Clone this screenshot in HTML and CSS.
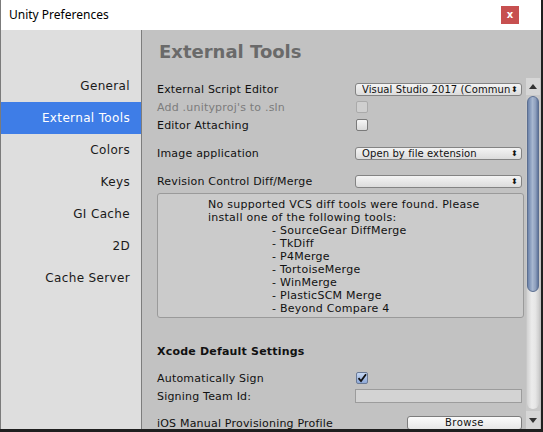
FILE: index.html
```html
<!DOCTYPE html>
<html>
<head>
<meta charset="utf-8">
<link rel="stylesheet" href="styles.css">
</head>
<body>
<div class="window">
  <div class="titlebar">
    <span class="title">Unity Preferences</span>
    <span class="close">x</span>
  </div>
  <div class="content">
    <nav class="sidebar">
      <div class="item">General</div>
      <div class="item selected">External Tools</div>
      <div class="item">Colors</div>
      <div class="item">Keys</div>
      <div class="item">GI Cache</div>
      <div class="item">2D</div>
      <div class="item">Cache Server</div>
    </nav>
    <main class="main">
      <h1 class="heading">External Tools</h1>
      <div class="scroller">
        <div class="pane">
          <div class="row"><span class="label">External Script Editor</span><span class="popup"><span class="ptext">Visual Studio 2017 (Commun</span><span class="arrows">⬍</span></span></div>
          <div class="row"><span class="label disabled">Add .unityproj's to .sln</span><span class="check disabled"></span></div>
          <div class="row"><span class="label">Editor Attaching</span><span class="check"></span></div>
          <div class="row gap"><span class="label">Image application</span><span class="popup"><span class="ptext">Open by file extension</span><span class="arrows">⬍</span></span></div>
          <div class="row gap"><span class="label">Revision Control Diff/Merge</span><span class="popup"><span class="ptext"></span><span class="arrows">⬍</span></span></div>
          <div class="helpbox">
            <div class="hline">No supported VCS diff tools were found. Please</div>
            <div class="hline">install one of the following tools:</div>
            <div class="hline tool">- SourceGear DiffMerge</div>
            <div class="hline tool">- TkDiff</div>
            <div class="hline tool">- P4Merge</div>
            <div class="hline tool">- TortoiseMerge</div>
            <div class="hline tool">- WinMerge</div>
            <div class="hline tool">- PlasticSCM Merge</div>
            <div class="hline tool">- Beyond Compare 4</div>
          </div>
          <div class="subhead">Xcode Default Settings</div>
          <div class="row"><span class="label">Automatically Sign</span><span class="check checked"><svg width="10" height="10" viewBox="0 0 10 10"><path d="M1.5 5.2 L4 8 L9 1.2" fill="none" stroke="#111" stroke-width="1.8"/></svg></span></div>
          <div class="row"><span class="label">Signing Team Id:</span><span class="field"></span></div>
          <div class="row gap2"><span class="label">iOS Manual Provisioning Profile</span><span class="spacer"></span><span class="button">Browse</span></div>
        </div>
        <div class="scrollbar">
          <div class="sb-up"><svg width="8" height="5" viewBox="0 0 8 5"><path d="M0 5 L4 0 L8 5 Z" fill="#333"/></svg></div>
          <div class="sb-track"><div class="sb-thumb"></div></div>
          <div class="sb-down"><svg width="8" height="5" viewBox="0 0 8 5"><path d="M0 0 L4 5 L8 0 Z" fill="#333"/></svg></div>
        </div>
      </div>
    </main>
  </div>
</div>
</body>
</html>
```

FILE: styles.css
```css
* { box-sizing: border-box; }
html, body { margin: 0; padding: 0; }
body {
  width: 543px;
  height: 432px;
  background: #1f1f1f;
  overflow: hidden;
  font-family: "DejaVu Sans", sans-serif;
}
.window {
  width: 541px;
  height: 429px;
  border-left: 1px solid #7b7b7b;
  display: flex;
  flex-direction: column;
  background: #c2c2c2;
}
.titlebar {
  height: 30px;
  flex-shrink: 0;
  background: #ffffff;
  display: flex;
  align-items: center;
  padding-left: 8px;
  padding-right: 21px;
}
.title {
  font-family: "Noto Sans", sans-serif;
  font-size: 12px;
  color: #000;
  flex: 1;
  margin-top: -1px;
}
.close {
  width: 18px;
  height: 18px;
  margin-right: 1px;
  background: #c75050;
  color: #fff;
  font-family: "DejaVu Sans", sans-serif;
  font-size: 10px;
  font-weight: bold;
  display: flex;
  align-items: center;
  justify-content: center;
  padding-bottom: 2px;
}
.content {
  flex: 1;
  display: flex;
  min-height: 0;
}
.sidebar {
  width: 141px;
  flex-shrink: 0;
  background: #dedede;
  border-right: 1px solid #7d7d7d;
  padding-top: 40px;
}
.item {
  height: 32px;
  display: flex;
  align-items: center;
  justify-content: flex-end;
  padding-right: 11px;
  font-size: 12px;
  letter-spacing: 0.35px;
  color: #1a1a1a;
}
.item.selected {
  background: #3e7de7;
  color: #ffffff;
}
.main {
  flex: 1;
  display: flex;
  flex-direction: column;
  min-width: 0;
}
.heading {
  margin: 0;
  height: 48px;
  flex-shrink: 0;
  padding-left: 17px;
  padding-top: 10px;
  font-size: 18px;
  font-weight: bold;
  color: #6a6a6a;
  line-height: 24px;
}
.scroller {
  flex: 1;
  display: flex;
  min-height: 0;
}
.pane {
  width: 384px;
  flex-shrink: 0;
  padding-left: 15px;
  padding-top: 2px;
  display: flex;
  flex-direction: column;
  overflow: hidden;
}
.pane > * { flex-shrink: 0; }
.row {
  height: 18px;
  display: flex;
  align-items: center;
  font-size: 11px;
  letter-spacing: 0.2px;
  color: #111;
}
.row.gap { margin-top: 10px; }
.row.gap2 { margin-top: 9px; }
.label {
  width: 198px;
  white-space: nowrap;
}
.label.disabled { color: #7c7c7c; }
.popup {
  width: 167px;
  height: 13px;
  border: 1px solid #838383;
  border-radius: 3px;
  background: linear-gradient(#f4f4f4, #dcdcdc);
  display: flex;
  align-items: center;
  padding-left: 6px;
  padding-right: 3px;
  font-size: 10px;
  letter-spacing: 0.1px;
  color: #111;
  overflow: hidden;
}
.ptext { flex: 1; white-space: nowrap; overflow: hidden; }
.arrows { font-size: 8px; letter-spacing: 0; }
.check {
  width: 12px;
  height: 12px;
  margin-left: 1px;
  border: 1px solid #7a7a7a;
  border-radius: 2px;
  background: linear-gradient(#f6f6f6, #dadada);
  display: flex;
  align-items: center;
  justify-content: center;
}
.check.disabled {
  border-color: #aaaaaa;
  background: #cfcfcf;
}
.check.checked {
  background: linear-gradient(#c6d7f2, #8fa9d8);
  border-color: #6a7a96;
}
.helpbox {
  margin-top: 3px;
  width: 367px;
  height: 125px;
  border: 1px solid #9a9a9a;
  border-radius: 3px;
  background: #cbcbcb;
  padding-left: 50px;
  padding-top: 4px;
}
.hline {
  font-size: 11px;
  letter-spacing: 0.26px;
  line-height: 13px;
  height: 13px;
  white-space: nowrap;
  color: #111;
}
.hline.tool { padding-left: 64px; }
.subhead {
  margin-top: 24px;
  height: 18px;
  display: flex;
  align-items: center;
  font-size: 11px;
  letter-spacing: 0.2px;
  font-weight: bold;
  color: #111;
  margin-bottom: 9px;
}
.field {
  width: 167px;
  height: 14px;
  border: 1px solid #9c9c9c;
  background: #d3d3d3;
}
.spacer { width: 52px; }
.button {
  width: 115px;
  height: 14px;
  border: 1px solid #7d7d7d;
  border-radius: 3px;
  background: linear-gradient(#fbfbfb, #e6e6e6);
  font-size: 10px;
  letter-spacing: 0.4px;
  text-align: center;
  line-height: 12px;
  color: #111;
}
.scrollbar {
  width: 14px;
  flex-shrink: 0;
  display: flex;
  flex-direction: column;
  background: #c8c8c8;
}
.sb-up, .sb-down {
  height: 17px;
  flex-shrink: 0;
  display: flex;
  align-items: center;
  justify-content: center;
  background: #d6d6d6;
}
.sb-down { height: 18px; }
.sb-track {
  flex: 1;
  background: linear-gradient(90deg, #d2d2d2, #ececec 40%, #e6e6e6 70%, #cfcfcf);
  border-radius: 7px;
  margin: 1px 1px 2px 1px;
  display: flex;
  flex-direction: column;
}
.sb-thumb {
  height: 196px;
  flex-shrink: 0;
  border-radius: 6px;
  background: linear-gradient(90deg, #6d84ab, #a7b7d0 45%, #8e9fbd 75%, #5f759c);
  border: 1px solid #5b6e90;
}
```
